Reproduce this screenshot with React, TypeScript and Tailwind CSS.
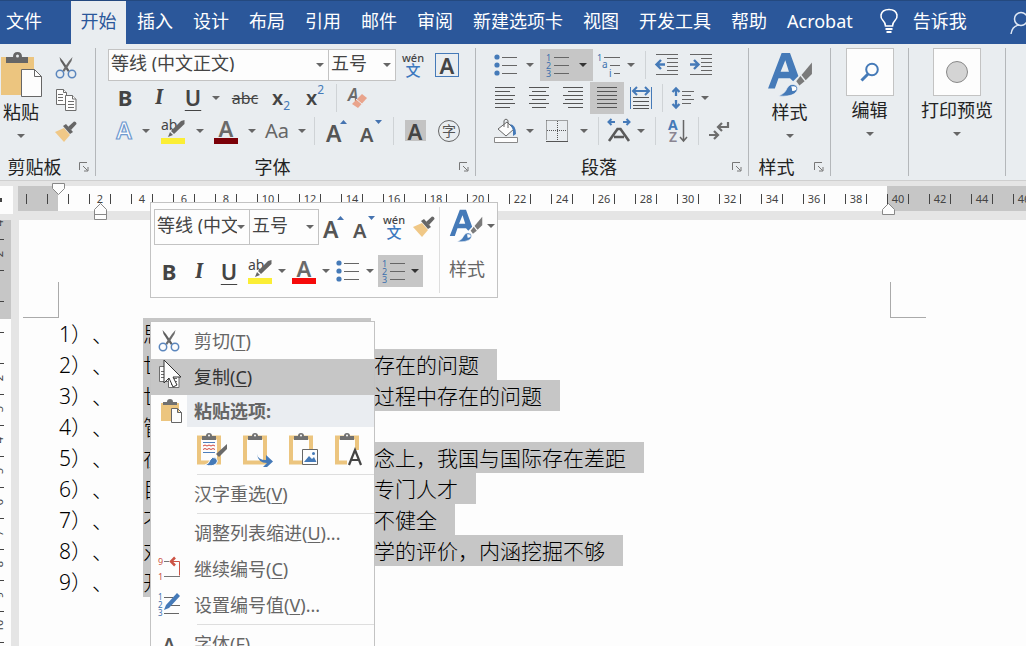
import type { ReactNode } from "react"
import clsx from "clsx"

const TABS = ["插入", "设计", "布局", "引用", "邮件", "审阅", "新建选项卡", "视图", "开发工具", "帮助", "Acrobat"]

const LINES = [
  { first: "思", rest: "" },
  { first: "世", rest: "存在的问题" },
  { first: "世", rest: "过程中存在的问题" },
  { first: "管", rest: "" },
  { first: "在", rest: "念上，我国与国际存在差距" },
  { first: "目", rest: "专门人才" },
  { first: "不", rest: "不健全" },
  { first: "对", rest: "学的评价，内涵挖掘不够" },
  { first: "开", rest: "" },
]

const RULER = Array.from({ length: 23 }, (_, i) => (i + 1) * 2)
const SIDE_RULER = ["4", "2", "", "", "", "2", "3", "4", "5", "6", "7", "8", "9", "10"]

/* ---------- small building blocks ---------- */

function Caret({ dark }: { dark?: boolean }) {
  return (
    <svg width="8" height="4" viewBox="0 0 8 4" className="shrink-0">
      <path d="M0 0h8L4 4z" fill={dark ? "#333" : "#666"} />
    </svg>
  )
}

function CaretButton({ label }: { label: string }) {
  return (
    <button aria-label={label} className="flex h-8 w-3 shrink-0 items-center justify-center">
      <Caret />
    </button>
  )
}

function Tool({ label, className, children }: { label: string; className?: string; children: ReactNode }) {
  return (
    <button aria-label={label} className={clsx("flex h-8 shrink-0 items-center justify-center", className)}>
      {children}
    </button>
  )
}

function Sep({ className }: { className?: string }) {
  return <span className={clsx("h-7 w-px shrink-0 bg-[#cfd3d6]", className)} />
}

function Combo({ label, value, className }: { label: string; value: string; className: string }) {
  return (
    <label className={clsx("flex shrink-0 items-center border border-[#c3c3c3] bg-[#fdfdfd] pr-1", className)}>
      <select
        aria-label={label}
        className="h-full min-w-0 flex-1 appearance-none overflow-hidden bg-transparent pb-1 pl-0.5 text-lg leading-none text-[#444] outline-none"
      >
        <option>{value}</option>
      </select>
      <Caret />
    </label>
  )
}

function Launcher({ label }: { label: string }) {
  return (
    <button aria-label={label} className="shrink-0">
      <svg width="10" height="10" viewBox="0 0 10 10" fill="none" stroke="#777">
        <path d="M.5 8V.5H8M4 4l4.5 4.5M9 5v4H5" />
      </svg>
    </button>
  )
}

function Group({ title, launcher, className, children }: { title?: string; launcher?: boolean; className: string; children: ReactNode }) {
  return (
    <section className={clsx("my-1 flex shrink-0 flex-col border-r border-[#b4b7ba]", className)}>
      {children}
      {title && (
        <div className="mt-auto flex h-[18px] items-center pr-1.5">
          <span className="flex min-w-0 flex-1 justify-center pr-[10px] text-lg leading-[18px] whitespace-nowrap text-[#222]">{title}</span>
          {launcher && <Launcher label={title} />}
        </div>
      )}
    </section>
  )
}

/* ---------- icons ---------- */

function ScissorsIcon() {
  return (
    <svg width="22" height="22" viewBox="0 0 22 22" fill="none">
      <path d="M4.500 0l1 4 4.500 7 3 4 1.500-1.500L8 4z" fill="#5f5f5f" />
      <path d="M17.500 0l-1 4-4.500 7-3 4-1.500-1.500L14 4z" fill="#6d6d6d" />
      <circle cx="5" cy="17" r="3.700" stroke="#5b86bd" strokeWidth="1.500" />
      <circle cx="17" cy="17" r="3.700" stroke="#5b86bd" strokeWidth="1.500" />
    </svg>
  )
}

function CopyIcon() {
  return (
    <svg width="22" height="24" viewBox="0 0 22 24" fill="#fdfdfd" stroke="#6d6d6d">
      <path d="M1.500 1.500h7l3 3v12h-10z" />
      <path d="M8.500 1.500v3h3M3 6.500h5M3 9.500h5M3 12.500h5" />
      <path d="M10.500 7.500h7l3.500 3.500v11.500H10.500z" />
      <path d="M17.500 7.500V11H21M13 13.500h6M13 16.500h6M13 19.500h6" />
    </svg>
  )
}

function BrushIcon() {
  return (
    <svg width="24" height="22" viewBox="0 0 24 22">
      <path d="M1 11l9-4 6 7-6 7z" fill="#f0c887" />
      <path d="M9 5l3-2 7 8-3 2z" fill="#666" />
      <path d="M14 6l6-5.500q2.500 0 2.500 2.500L17 9z" fill="#666" />
    </svg>
  )
}

function PasteIcon() {
  return (
    <svg width="42" height="46" viewBox="0 0 42 46">
      <path d="M1 5h33v38H1z" fill="#ecc57f" />
      <path d="M6 5h7q0-5 4.500-5T22 5h6v6H6z" fill="#666" />
      <circle cx="17.500" cy="4" r="1.500" fill="#e9edf0" />
      <path d="M21.500 17.500h13l7 7v20h-20z" fill="#fdfdfd" stroke="#666" />
      <path d="M34.500 17.500v7h7" fill="none" stroke="#666" />
    </svg>
  )
}

type PasteKind = "page" | "source" | "merge" | "picture" | "text"

function ClipIcon({ kind }: { kind: PasteKind }) {
  return (
    <svg width="32" height="34" viewBox="0 0 32 34">
      {kind === "page" ? (
        <path d="M2 5h18v18H2z" fill="#ecc57f" />
      ) : (
        <path d="M3 4.500h20v25H3z" fill="#fdfdfd" stroke="#ecc57f" strokeWidth="4" />
      )}
      {kind === "page" ? (
        <path d="M4 4h4q0-3 3-3t3 3h4v3H4z" fill="#707070" />
      ) : (
        <>
          <path d="M6 3h4q0-3 3-3t3 3h4v4H6z" fill="#707070" />
          <circle cx="13" cy="2.500" r="1" fill="#fdfdfd" />
        </>
      )}
      {kind === "page" && <path d="M12.500 10.500h6l4 4v10h-10zM18.500 10.500v4h4" fill="#fdfdfd" stroke="#666" />}
      {kind === "source" && (
        <>
          <path d="M7 9.500h12M7 19.500h12" stroke="#4d7ebb" />
          <path d="M7 13l2-1 2 1 2-1 2 1 2-1 2 1M7 16.500l2-1 2 1 2-1 2 1 2-1 2 1" stroke="#d0463b" fill="none" />
          <path d="M31 11v5l-8 8-3-3z" fill="#6a6a6a" />
          <path d="M9 32q4-1 5-5 2-4 6-2 3 3 0 6-4 3-11 1z" fill="#457ab8" stroke="#fdfdfd" />
        </>
      )}
      {kind === "merge" && (
        <path d="M15 21q1 6 9 6v-5l7 6.500-6 5.500h-4l4-4q-9 0-10-9z" fill="#457ab8" />
      )}
      {kind === "picture" && (
        <>
          <path d="M14.500 16.500h15v15h-15z" fill="#fdfdfd" stroke="#666" />
          <path d="M16 29l5-6 3 3 2-2 2.500 5z" fill="#457ab8" />
          <circle cx="25.500" cy="20.500" r="1.500" fill="#457ab8" />
        </>
      )}
      {kind === "text" && (
        <>
          <path d="M13 17h16v17H13z" fill="#fdfdfd" />
          <path d="M15 32l6-15 6 15M17 27h8" fill="none" stroke="#444" strokeWidth="2.200" />
        </>
      )}
    </svg>
  )
}

function HighlightIcon() {
  return (
    <svg width="26" height="28" viewBox="0 0 26 28">
      <text x="1" y="13" fontSize="14" fill="#444">ab</text>
      <path d="M24.500 3v4L14 17l-3-3L21 4z" fill="#666" />
      <path d="M10 15l3 3-5 2z" fill="#666" />
      <path d="M1 21h24v6H1z" fill="#fbee35" />
    </svg>
  )
}

function FontColorIcon({ color }: { color: string }) {
  return (
    <svg width="26" height="28" viewBox="0 0 26 28">
      <text x="13" y="20" fontSize="22" fontWeight="600" textAnchor="middle" fill="#6a6a6a">A</text>
      <path d="M1 21h24v6H1z" fill={color} />
    </svg>
  )
}

function SizeIcon({ up }: { up?: boolean }) {
  return (
    <svg width="22" height="26" viewBox="0 0 22 26">
      <text x="0" y="24" fontSize={up ? 23 : 20} fontWeight="600" fill="#555">A</text>
      <path d={up ? "M14 6h7l-3.500-4z" : "M15 2h7l-3.500 4z"} fill="#4573b0" />
    </svg>
  )
}

function PinyinIcon() {
  return (
    <svg width="24" height="28" viewBox="0 0 24 28">
      <text x="12" y="11" fontSize="11" fontWeight="500" textAnchor="middle" fill="#444">wén</text>
      <text x="12" y="25" fontSize="15" fontWeight="500" textAnchor="middle" fill="#3c78bf">文</text>
    </svg>
  )
}

function BulletsIcon() {
  return (
    <svg width="24" height="22" viewBox="0 0 24 22">
      {[3, 11, 19].map((y) => (
        <g key={y}>
          <circle cx="3" cy={y} r="2.600" fill="#457ab8" />
          <path d={`M8 ${y}.500h15`} stroke="#666" />
        </g>
      ))}
    </svg>
  )
}

function NumbersIcon() {
  return (
    <svg width="24" height="26" viewBox="0 0 24 26">
      {[1, 2, 3].map((n) => (
        <g key={n}>
          <text x="0" y={n * 8 + 1} fontSize="9" fill="#3c70ad">{n}</text>
          <path d={`M8 ${n * 8 - 3}.500h15`} stroke="#666" />
        </g>
      ))}
    </svg>
  )
}

function MultilevelIcon() {
  return (
    <svg width="24" height="26" viewBox="0 0 24 26">
      <text x="0" y="9" fontSize="9" fill="#3c70ad">1</text>
      <text x="5" y="16" fontSize="10" fill="#3c70ad">a</text>
      <text x="12" y="25" fontSize="10" fill="#3c70ad">i</text>
      <path d="M7 5.500h16M13 13.500h10M17 21.500h6" stroke="#666" />
    </svg>
  )
}

function IndentIcon({ out }: { out?: boolean }) {
  return (
    <svg width="24" height="22" viewBox="0 0 24 22" fill="none">
      <path d="M1 .500h22M12 4.500h11M12 8.500h11M12 12.500h11M12 16.500h11M1 20.500h22" stroke="#666" />
      <path d={out ? "M10 10.500H2M6 6l-4.500 4.500L6 15" : "M1 10.500h8M5 6l4.500 4.500L5 15"} stroke="#457ab8" strokeWidth="2.400" />
    </svg>
  )
}

function AlignIcon({ d }: { d: string }) {
  return (
    <svg width="22" height="22" viewBox="0 0 22 22">
      <path d={d} stroke="#555" />
    </svg>
  )
}

function DistributeIcon() {
  return (
    <svg width="24" height="24" viewBox="0 0 24 24" fill="none">
      <path d="M1.500 1v22M22.500 1v22" stroke="#457ab8" />
      <path d="M4 5h16M8 1L4 5l4 4M16 1l4 4-4 4" stroke="#457ab8" strokeWidth="2" />
      <path d="M4 11.500h16M4 15.500h16M4 19.500h16M4 22.500h16" stroke="#555" />
    </svg>
  )
}

function SpacingIcon() {
  return (
    <svg width="24" height="24" viewBox="0 0 24 24" fill="none">
      <path d="M5 2v8M1.500 6L5 2.500 8.500 6M5 14v8M1.500 18L5 21.500 8.500 18" stroke="#457ab8" strokeWidth="2.300" />
      <path d="M11 5.500h12M11 9.500h9M11 13.500h12M11 17.500h9" stroke="#666" />
    </svg>
  )
}

function BucketIcon() {
  return (
    <svg width="26" height="26" viewBox="0 0 26 26" fill="none">
      <path d="M5 11l9-7 7 7-8 7z" fill="#fdfdfd" stroke="#666" />
      <path d="M11 9V2.500q2-3 4 0V10" stroke="#666" />
      <path d="M17 6q6 1 6 10l-3 2v-6z" fill="#457ab8" />
      <path d="M1.500 19.500h23v5h-23z" fill="#fdfdfd" stroke="#888" />
    </svg>
  )
}

function BordersIcon() {
  return (
    <svg width="22" height="22" viewBox="0 0 22 22" fill="none" stroke="#555">
      <path d="M.500.500h21v20M.500.500v20M11.500 1v20M1 10.500h20" strokeDasharray="1 1" />
      <path d="M0 21.500h22" />
    </svg>
  )
}

function CharScaleIcon() {
  return (
    <svg width="26" height="26" viewBox="0 0 26 26" fill="none">
      <path d="M3 23l8.500-12h3L23 23M8 19h10" stroke="#5a5a5a" strokeWidth="2.600" />
      <path d="M9 4H2.500M5.500 1l-3 3 3 3M17 4h6.500M20.500 1l3 3-3 3" stroke="#457ab8" strokeWidth="2" />
    </svg>
  )
}

function SortIcon() {
  return (
    <svg width="22" height="26" viewBox="0 0 22 26" fill="none">
      <text x="1" y="12" fontSize="14" fontWeight="700" fill="#457ab8">A</text>
      <text x="2" y="24" fontSize="14" fontWeight="600" fill="#8a8591">Z</text>
      <path d="M16.500 2v20M13 19l3.500 4 3.500-4" stroke="#666" strokeWidth="1.500" />
    </svg>
  )
}

function MarksIcon() {
  return (
    <svg width="22" height="20" viewBox="0 0 22 20" fill="none" stroke="#6d6d6d" strokeWidth="2.200">
      <path d="M20 1v5H10M14 2l-4 4 4 4M1 14h9M6 10l4 4-4 4" />
    </svg>
  )
}

function EraserIcon() {
  return (
    <svg width="22" height="24" viewBox="0 0 22 24">
      <text x="1" y="15" fontSize="17" fontWeight="600" fontStyle="italic" fill="#6a6a6a">A</text>
      <path d="M15 8l5 4-9 10-6-4z" fill="#e9a48c" />
      <path d="M9 13l6 5" stroke="#e9edf0" />
    </svg>
  )
}

function StyleIcon({ size }: { size: number }) {
  return (
    <svg width={size} height={size} viewBox="0 0 44 44">
      <path d="M1 35L14 1h8l8 22-5 5-3-3H11L7.500 35zM13 19h8L17.500 8z" fillRule="evenodd" fill="#457ab8" />
      <path d="M43 10v11l-6 6-4-5z" fill="#7a7a7a" />
      <path d="M32 23l4 5-5 4-3-4z" fill="#7a7a7a" />
      <path d="M11 42q6-2 8-7 3-6 9-3 3 4-2 8-5 3-15 2z" fill="#457ab8" stroke="#f3f5f7" strokeWidth=".6" />
      <path d="M23 33q6-1 5 3-3 2-4 1 0-3-1-4z" fill="#fdfdfd" />
    </svg>
  )
}

function BulbIcon() {
  return (
    <svg width="20" height="26" viewBox="0 0 20 26" fill="none" stroke="#fff" strokeWidth="1.600">
      <path d="M6.500 18q0-3-2.500-5.500Q1.500 10 2 7q1-5.500 8-5.500T18 7q.5 3-2 5.500Q13.500 15 13.500 18z" />
      <path d="M6.500 21h7M7.500 24h5" strokeWidth="2" />
    </svg>
  )
}

function RestartIcon() {
  return (
    <svg width="24" height="26" viewBox="0 0 24 26" fill="none" stroke="#cc5345">
      <text x="1" y="9" fontSize="9" fill="#cc5345" stroke="none">9</text>
      <text x="1" y="24" fontSize="9" fill="#cc5345" stroke="none">1</text>
      <path d="M7 5.500h5M7 20.500h16" stroke="#777" />
      <path d="M14 5.500h8.500v14" />
      <path d="M18 1.500l-4 4 4 4" strokeWidth="2.500" />
    </svg>
  )
}

function SetValueIcon() {
  return (
    <svg width="24" height="26" viewBox="0 0 24 26">
      {[1, 2, 3].map((n) => (
        <text key={n} x="1" y={n * 8} fontSize="8" fill="#3c70ad">{n}</text>
      ))}
      <path d="M7 5.500h9M14 13.500h9M7 21.500h15" stroke="#666" />
      <path d="M20 1l3 3-11 12-5 2 2-5z" fill="#457ab8" />
    </svg>
  )
}

/* ---------- ribbon ---------- */

function TabStrip() {
  return (
    <nav className="flex h-11 items-stretch overflow-hidden border-t border-[#24497f] bg-[#2b579a] text-lg text-white">
      <button className="w-[71px] shrink-0 pb-1 pl-1.5 text-left">文件</button>
      <button className="mr-px w-[55px] shrink-0 bg-[#e9edf0] pb-1 text-[#2b579a]">开始</button>
      {TABS.map((t) => (
        <button key={t} className="shrink-0 px-[10px] pb-1">{t}</button>
      ))}
      <button className="ml-4 flex shrink-0 items-center gap-[14px] pb-1">
        <BulbIcon />
        告诉我
      </button>
      <button aria-label="共享" className="ml-auto w-4 shrink-0">
        <svg width="24" height="26" viewBox="0 0 24 26" fill="none" stroke="#dfe8f5" strokeWidth="1.500">
          <circle cx="11" cy="9" r="6.500" />
          <path d="M1 24q1-8 8-9" />
        </svg>
      </button>
    </nav>
  )
}

function BigButton({ label, children }: { label: string; children: ReactNode }) {
  return (
    <button className="flex flex-col items-center text-lg leading-7 text-[#222]">
      {children}
      <span className="mb-2 whitespace-nowrap">{label}</span>
      <Caret />
    </button>
  )
}

function FontGroup() {
  return (
    <Group title="字体" launcher className="w-[380px]">
      <div className="flex h-[33px] items-center pl-3">
        <Combo label="字体" value="等线 (中文正文)" className="h-8 w-[221px]" />
        <Combo label="字号" value="五号" className="-ml-px h-8 w-[68px]" />
        <Tool label="拼音指南" className="w-[34px]"><PinyinIcon /></Tool>
        <Tool label="字符边框" className="w-[34px]">
          <span className="flex size-6 items-center justify-center border border-[#457ab8] text-[22px] font-semibold leading-none text-[#444]">A</span>
        </Tool>
      </div>
      <div className="flex h-[33px] items-center pl-3 text-[22px] text-[#444]">
        <Tool label="加粗" className="w-[34px] font-bold">B</Tool>
        <Tool label="倾斜" className="w-[34px] font-serif font-bold italic">I</Tool>
        <Tool label="下划线" className="w-[34px] font-semibold underline decoration-1 underline-offset-4">U</Tool>
        <CaretButton label="下划线样式" />
        <Tool label="删除线" className="ml-1 w-[38px] text-base line-through">abc</Tool>
        <Tool label="下标" className="w-[34px] text-xl font-semibold">
          <span className="leading-none">x</span>
          <span className="self-end text-xs font-normal text-[#457ab8]">2</span>
        </Tool>
        <Tool label="上标" className="w-[34px] text-xl font-semibold">
          <span className="leading-none">x</span>
          <span className="self-start text-xs font-normal text-[#457ab8]">2</span>
        </Tool>
        <Sep className="mx-1" />
        <Tool label="清除格式" className="w-[34px]"><EraserIcon /></Tool>
      </div>
      <div className="flex h-[33px] items-center pl-3">
        <Tool label="文本效果" className="w-8">
          <svg width="22" height="24" viewBox="0 0 22 24">
            <text x="11" y="20" fontSize="23" fontWeight="600" textAnchor="middle" fill="#fdfdfd" stroke="#6f9ad0" strokeWidth="1.200">A</text>
          </svg>
        </Tool>
        <CaretButton label="文本效果选项" />
        <Tool label="突出显示" className="w-[42px]"><HighlightIcon /></Tool>
        <CaretButton label="突出显示颜色" />
        <Tool label="字体颜色" className="w-10"><FontColorIcon color="#7b0008" /></Tool>
        <CaretButton label="更多字体颜色" />
        <Tool label="更改大小写" className="w-[38px] text-xl text-[#666]">Aa</Tool>
        <CaretButton label="大小写选项" />
        <Sep className="mx-1.5" />
        <Tool label="增大字号" className="w-8"><SizeIcon up /></Tool>
        <Tool label="减小字号" className="w-9"><SizeIcon /></Tool>
        <Sep className="mx-1" />
        <Tool label="字符底纹" className="w-[34px]">
          <span className="flex size-[21px] items-center justify-center bg-[#c3c3c3] text-[22px] font-semibold leading-none text-[#444]">A</span>
        </Tool>
        <Tool label="带圈字符" className="w-[34px]">
          <span className="flex size-[22px] items-center justify-center rounded-full border border-[#666] text-sm leading-none text-[#555]">字</span>
        </Tool>
      </div>
    </Group>
  )
}

function ParagraphGroup() {
  return (
    <Group title="段落" launcher className="w-[273px]">
      <div className="flex h-[33px] items-center pl-3">
        <Tool label="项目符号" className="w-9"><BulletsIcon /></Tool>
        <CaretButton label="项目符号选项" />
        <button aria-label="编号" className="ml-1 flex h-8 w-[53px] shrink-0 items-center justify-between bg-[#c6c6c6] px-1.5">
          <NumbersIcon />
          <Caret dark />
        </button>
        <Tool label="多级列表" className="w-8"><MultilevelIcon /></Tool>
        <CaretButton label="多级列表选项" />
        <Sep className="ml-2 mr-1" />
        <Tool label="减少缩进量" className="w-[34px]"><IndentIcon out /></Tool>
        <Tool label="增加缩进量" className="w-[34px]"><IndentIcon /></Tool>
      </div>
      <div className="flex h-[33px] items-center pl-3">
        <Tool label="左对齐" className="w-[34px]"><AlignIcon d="M1 .500h20M1 4.500h15M1 8.500h20M1 12.500h18M1 16.500h20M1 20.500h15" /></Tool>
        <Tool label="居中" className="w-[34px]"><AlignIcon d="M1 .500h20M4 4.500h14M1 8.500h20M4 12.500h14M1 16.500h20M4 20.500h14" /></Tool>
        <Tool label="右对齐" className="w-[34px]"><AlignIcon d="M1 .500h20M6 4.500h15M1 8.500h20M3 12.500h18M1 16.500h20M6 20.500h15" /></Tool>
        <Tool label="两端对齐" className="w-[34px] bg-[#c6c6c6]"><AlignIcon d="M1 .500h20M1 4.500h20M1 8.500h20M1 12.500h20M1 16.500h20M1 20.500h20" /></Tool>
        <Tool label="分散对齐" className="w-[34px]"><DistributeIcon /></Tool>
        <Sep className="mx-1" />
        <Tool label="行距" className="w-8"><SpacingIcon /></Tool>
        <CaretButton label="行距选项" />
      </div>
      <div className="flex h-[33px] items-center pl-3">
        <Tool label="底纹" className="w-9"><BucketIcon /></Tool>
        <CaretButton label="底纹颜色" />
        <Tool label="边框" className="w-[42px]"><BordersIcon /></Tool>
        <CaretButton label="边框选项" />
        <Sep className="ml-2" />
        <Tool label="中文版式" className="ml-1 w-8"><CharScaleIcon /></Tool>
        <CaretButton label="中文版式选项" />
        <Sep className="mx-2" />
        <Tool label="排序" className="w-7"><SortIcon /></Tool>
        <Sep className="mx-1.5" />
        <Tool label="显示编辑标记" className="w-7"><MarksIcon /></Tool>
      </div>
    </Group>
  )
}

function Ribbon() {
  return (
    <div className="flex h-[137px] shrink-0 overflow-hidden border-b border-[#cfcfcf] bg-[#e9edf0]">
      <Group title="剪贴板" launcher className="w-24">
        <div className="flex pt-1">
          <BigButton label="粘贴"><PasteIcon /></BigButton>
          <div className="ml-2.5 flex flex-col items-center">
            <Tool label="剪切" className="w-7"><ScissorsIcon /></Tool>
            <Tool label="复制" className="w-7"><CopyIcon /></Tool>
            <Tool label="格式刷" className="w-7"><BrushIcon /></Tool>
          </div>
        </div>
      </Group>
      <FontGroup />
      <ParagraphGroup />
      <Group title="样式" launcher className="w-[82px]">
        <div className="flex justify-center pt-1">
          <BigButton label="样式"><StyleIcon size={46} /></BigButton>
        </div>
      </Group>
      <Group className="w-[78px] items-center">
        <BigButton label="编辑">
          <span className="flex size-12 items-center justify-center border border-[#c3c3c3] bg-[#fdfdfd]">
            <svg width="20" height="20" viewBox="0 0 20 20" fill="none" stroke="#457ab8">
              <circle cx="12" cy="7.500" r="5.800" strokeWidth="2" />
              <path d="M8 12l-6.500 6.500" strokeWidth="3" />
            </svg>
          </span>
        </BigButton>
      </Group>
      <Group className="w-[97px] items-center">
        <BigButton label="打印预览">
          <span className="flex size-12 items-center justify-center border border-[#c3c3c3] bg-[#fdfdfd]">
            <span className="size-[22px] rounded-full border border-[#888] bg-[#d4d4d4]" />
          </span>
        </BigButton>
      </Group>
    </div>
  )
}

/* ---------- rulers ---------- */

function Ruler() {
  return (
    <div className="relative flex h-[39px] shrink-0 items-start bg-[#e5e5e5] pt-[5px] text-[11px] text-[#444]">
      <div className="flex h-7 w-[13px] shrink-0 items-center bg-[#fdfdfd]">
        <span className="h-1 w-0.5 bg-[#444]" />
      </div>
      <div className="ml-[5px] flex h-[25px] min-w-0 flex-1 items-center overflow-hidden bg-[#c6c6c6]">
        <div className="flex h-full w-10 shrink-0 items-center gap-5 pl-2">
          <i className="h-2.5 w-px bg-[#444]" />
          <i className="h-2.5 w-px bg-[#444]" />
        </div>
        <div className="flex h-full w-[21px] shrink-0 items-center justify-center bg-[#fdfdfd]">
          <i className="h-2.5 w-px bg-[#444]" />
        </div>
        {RULER.map((n) => (
          <div
            key={n}
            className={clsx(
              "flex h-full w-[42px] shrink-0 items-center justify-between px-[10px]",
              n < 40 && "bg-[#fdfdfd]",
              n === 40 && "bg-linear-to-r from-[#fdfdfd] from-25% to-[#c6c6c6] to-25%",
            )}
          >
            <i className="h-2.5 w-px bg-[#444]" />
            <span className="leading-none">{n}</span>
            <i className="h-2.5 w-px bg-[#444]" />
          </div>
        ))}
      </div>
      <svg className="absolute left-[52px] top-0.5" width="13" height="13" viewBox="0 0 13 13" fill="#fdfdfd" stroke="#888">
        <path d="M.500.500h12v5l-6 6-6-6z" />
      </svg>
      <svg className="absolute left-[94px] top-[22px]" width="13" height="17" viewBox="0 0 13 17" fill="#fdfdfd" stroke="#888">
        <path d="M.500 16.500v-10l6-6 6 6v10zM.500 11.500h12" />
      </svg>
      <svg className="absolute left-[882px] top-[22px]" width="13" height="12" viewBox="0 0 13 12" fill="#fdfdfd" stroke="#888">
        <path d="M.500 11.500v-5l6-6 6 6v5z" />
      </svg>
    </div>
  )
}

function SideRuler() {
  return (
    <div className="flex w-[11px] shrink-0 flex-col overflow-hidden bg-[#fdfdfd] text-[11px] text-[#444]">
      {SIDE_RULER.map((n, i) => (
        <div
          key={i}
          className={clsx(
            "flex h-[31px] shrink-0 flex-col justify-between",
            i < 3 && "bg-[#c6c6c6]",
            i === 3 && "border-t-6 border-[#c6c6c6]",
          )}
        >
          <span className="-ml-2 flex h-1.5 w-3 -rotate-90 items-center justify-center leading-none">{n}</span>
          <i className="mb-[11px] h-px w-1 bg-[#444]" />
        </div>
      ))}
    </div>
  )
}

/* ---------- popups ---------- */

function MiniToolbar() {
  return (
    <div className="absolute left-[150px] top-[202px] flex h-24 w-[348px] border border-[#c3c3c3] bg-[#fdfdfd] text-[#444]">
      <div className="flex flex-col pl-[3px] pt-1.5">
        <div className="flex h-9 items-center">
          <Combo label="浮动字体" value="等线 (中文正文)" className="h-9 w-[96px]" />
          <Combo label="浮动字号" value="五号" className="-ml-px h-9 w-[70px]" />
          <Tool label="增大字号" className="w-[30px]"><SizeIcon up /></Tool>
          <Tool label="减小字号" className="w-[30px]"><SizeIcon /></Tool>
          <Tool label="拼音指南" className="w-[30px]"><PinyinIcon /></Tool>
          <Tool label="格式刷" className="w-[30px]"><BrushIcon /></Tool>
        </div>
        <div className="mt-2.5 flex h-8 items-center text-[22px]">
          <Tool label="加粗" className="w-[30px] font-bold">B</Tool>
          <Tool label="倾斜" className="w-[30px] font-serif font-bold italic">I</Tool>
          <Tool label="下划线" className="w-[30px] font-semibold underline decoration-1 underline-offset-4">U</Tool>
          <Tool label="突出显示" className="w-8"><HighlightIcon /></Tool>
          <CaretButton label="突出显示颜色" />
          <Tool label="字体颜色" className="w-8"><FontColorIcon color="#f60a0a" /></Tool>
          <CaretButton label="更多字体颜色" />
          <Tool label="项目符号" className="w-8"><BulletsIcon /></Tool>
          <CaretButton label="项目符号选项" />
          <button aria-label="编号" className="ml-0.5 flex h-8 w-[45px] shrink-0 items-center justify-between bg-[#c6c6c6] px-1">
            <NumbersIcon />
            <Caret dark />
          </button>
        </div>
      </div>
      <button className="my-1 ml-auto flex w-[58px] flex-col border-l border-[#dedede] pl-[9px] text-left text-lg text-[#666]">
        <span className="flex items-center gap-1 pt-0.5">
          <StyleIcon size={34} />
          <Caret />
        </span>
        <span className="mt-3">样式</span>
      </button>
    </div>
  )
}

function MenuItem({ icon, text, hotkey, more, active }: { icon?: ReactNode; text: string; hotkey: string; more?: boolean; active?: boolean }) {
  return (
    <button
      role="menuitem"
      className={clsx("flex h-9 w-full shrink-0 items-center text-lg", active ? "bg-[#c6c6c6] text-[#333]" : "text-[#666]")}
    >
      <span className="flex w-9 shrink-0 justify-center">{icon}</span>
      <span className="pl-[7px] whitespace-nowrap">
        {text}(<u className="decoration-1 underline-offset-2">{hotkey}</u>){more && "..."}
      </span>
    </button>
  )
}

function MenuLine() {
  return <hr className="my-px ml-[46px] border-[#dedede]" />
}

function ContextMenu() {
  const kinds: PasteKind[] = ["source", "merge", "picture", "text"]
  return (
    <div role="menu" className="absolute left-[150px] top-[321px] flex w-[225px] flex-col border border-[#c3c3c3] bg-[#fdfdfd] pt-px">
      <MenuItem icon={<ScissorsIcon />} text="剪切" hotkey="T" />
      <MenuItem icon={<CopyIcon />} text="复制" hotkey="C" active />
      <div className="flex h-8 items-center text-lg font-bold text-[#666]">
        <span className="flex w-9 shrink-0 pl-2 pt-2"><ClipIcon kind="page" /></span>
        <span className="flex h-full flex-1 items-center bg-[#eaedf1] pl-[7px]">粘贴选项:</span>
      </div>
      <div className="flex h-[46px] items-center gap-[14px] pl-[45px]">
        {kinds.map((k) => (
          <button key={k} aria-label={k} className="shrink-0"><ClipIcon kind={k} /></button>
        ))}
      </div>
      <MenuLine />
      <MenuItem text="汉字重选" hotkey="V" />
      <MenuLine />
      <MenuItem text="调整列表缩进" hotkey="U" more />
      <MenuItem icon={<RestartIcon />} text="继续编号" hotkey="C" />
      <MenuItem icon={<SetValueIcon />} text="设置编号值" hotkey="V" more />
      <MenuLine />
      <MenuItem icon={<span className="font-semibold text-[#555]">A</span>} text="字体" hotkey="F" />
    </div>
  )
}

function Pointer() {
  return (
    <svg className="absolute left-[163px] top-[359px]" width="19" height="29" viewBox="0 0 19 29">
      <path d="M1 1v23l5-5 4 9 4-2-4-8h8z" fill="#fdfdfd" stroke="#333" />
    </svg>
  )
}

/* ---------- page ---------- */

function Document() {
  return (
    <main className="min-w-0 flex-1 overflow-hidden bg-[#fdfdfd] pl-1 pt-[62px]">
      <div className="flex h-9 gap-[831px]">
        <span className="w-9 shrink-0 border-b border-r border-[#aaa]" />
        <span className="w-9 shrink-0 border-b border-l border-[#aaa]" />
      </div>
      <ol className="pl-9 text-[21px] font-light text-black">
        {LINES.map((line, i) => (
          <li key={i} className="flex h-[31px] leading-[33px] whitespace-nowrap">
            <span className="w-[84px] shrink-0 [text-spacing-trim:space-all]">{i + 1}）、</span>
            <span className="flex h-full bg-[#c6c6c6]">
              <span className={line.rest ? "w-[231px]" : "w-[228px]"}>{line.first}</span>
              {line.rest && <span className="pr-[18px]">{line.rest}</span>}
            </span>
          </li>
        ))}
      </ol>
    </main>
  )
}

export default function App() {
  return (
    <div
      lang="zh-CN"
      className="relative flex h-screen flex-col overflow-hidden bg-[#e5e5e5] font-['Noto_Sans','Noto_Sans_CJK_SC',sans-serif] [&_svg]:overflow-visible"
    >
      <TabStrip />
      <Ribbon />
      <Ruler />
      <div className="flex min-h-0 flex-1 gap-2">
        <SideRuler />
        <Document />
      </div>
      <MiniToolbar />
      <ContextMenu />
      <Pointer />
    </div>
  )
}
